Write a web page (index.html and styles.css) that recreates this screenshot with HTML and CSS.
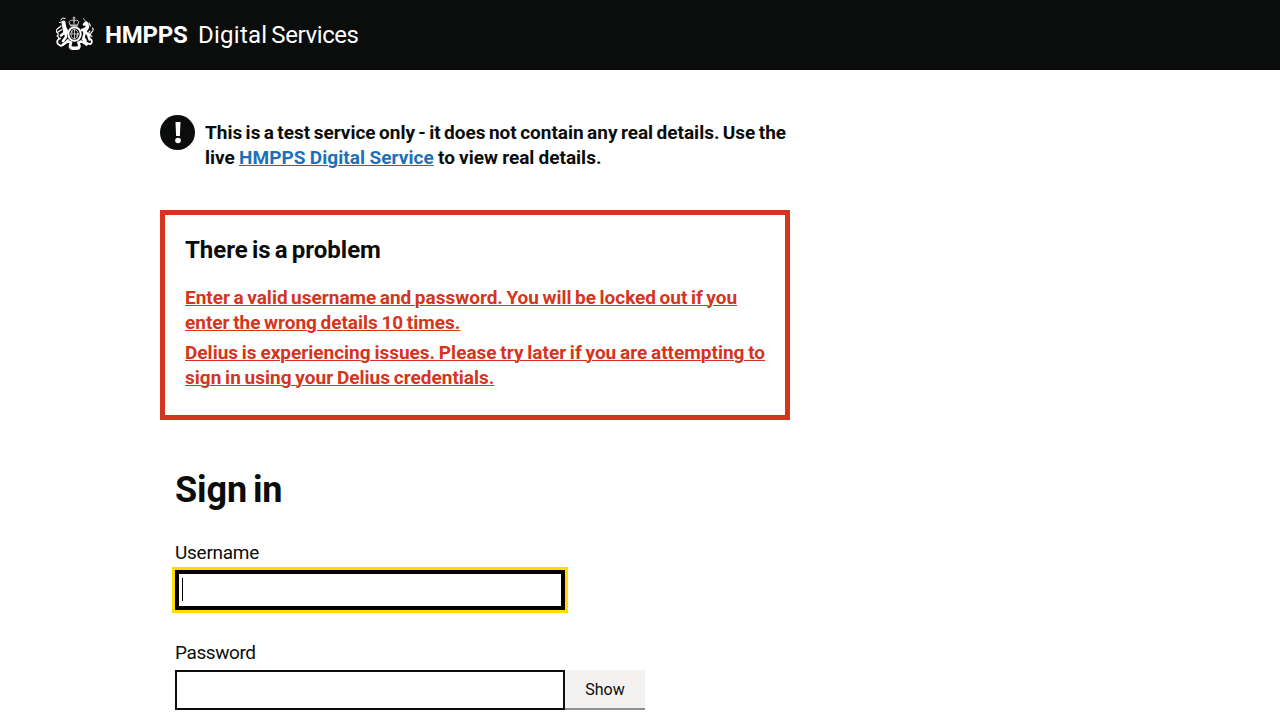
FILE: index.html
```html
<!DOCTYPE html>
<html lang="en">
<head>
<meta charset="utf-8">
<title>HMPPS Digital Services - Sign in</title>
<link rel="stylesheet" href="styles.css">
</head>
<body>
<header class="header">
  <svg class="crest" viewBox="0 0 40 35" width="40" height="35" aria-hidden="true">
    <g fill="none" stroke="#fff" stroke-linecap="round" stroke-linejoin="round">
      <path stroke-width=".8" d="M19 1v2.500M18 2h2M14.200 5.800c1-2 3.500-2 4.800-.6 1.300-1.400 3.800-1.400 4.800.6l-1.300 3.200h-7zM19 4v4M15.500 9.800h7"/>
      <ellipse cx="19.500" cy="18" rx="6.200" ry="6.800" stroke-width="2"/>
      <ellipse cx="19.500" cy="18" rx="3.600" ry="4.500" stroke-width=".7"/>
      <path stroke-width=".7" d="M19.500 13v10M15.500 18h8M17 15v2M22 19v2.500"/>
      <path stroke-width="4" d="M8.500 6.500l.8 5L11.500 16"/>
      <path stroke-width="2.500" d="M10 12l-1 5-3 2.500M10.500 16.500l.5 4.500-3 4"/>
      <path stroke-width="1.200" d="M6 10l-3 2.500M7 13.500l-4 2.500M2.500 19.500l1.500 3M3.500 12c-2.500 1-2.500 4-1 5s.5 2.500-.5 3"/>
      <path stroke-width="1" d="M6 4l1.500-2 2.500.5M6.500 6l-2 .5"/>
      <path stroke-width=".7" d="M28.300 2.300l2.500 3.200"/>
      <path stroke-width="3.600" d="M31.500 7.500l1 3.500-3 4.500"/>
      <path stroke-width="2.500" d="M29 8.500l2-2M31 12.500l-4 1.500M30 15.500l3 3 1.500 5M30 16l-1.500 5.500 2 3"/>
      <path stroke-width="1.100" d="M34 7l1.500 3M37.500 12c1.500 1.500.5 3-1 4.500s-1.500 3 .5 4M35 15c-2 1-1 3 0 5"/>
      <path stroke-width="1.800" d="M5 22.500c-3 1-3.500 4-2 5.500M3 28l3 2 3-2 4-4M35 22.500c2.500 2 2.500 4 .5 5.500l-3-.5-5-4.500"/>
      <path stroke-width="2.700" d="M8 28.500c2-1.500 3.500-3 5.500-3l2.500 1 -1 4c2 3 7.500 3 9.500 0l-1-4 2.500-1c2 0 3.500 1.500 5.500 3"/>
      <path stroke-width="3" d="M16 32h7.500"/>
    </g>
  </svg>
  <span class="organisation">HMPPS</span>
  <span class="service"><span class="service-first">Digital</span> <span class="service-second">Services</span></span>
</header>
<main class="content">
  <div class="warning">
    <span class="warning-icon"><svg viewBox="0 0 35 35" width="35" height="35" aria-hidden="true"><path fill="#fff" d="M15.500 7h5l-.6 14h-3.800z"/><circle cx="18" cy="25.500" r="2.800" fill="#fff"/></svg></span>
    <strong class="warning-text"><span class="w1">This is a test service only - it does not contain any real details. Use the</span><br><span class="w2">live <a href="#">HMPPS Digital Service</a> to view real details.</span></strong>
  </div>
  <section class="error-summary">
    <h2 class="error-title">There is a problem</h2>
    <ul class="error-list">
      <li><a href="#username"><span class="e1">Enter a valid username and password. You will be locked out if you</span><br><span class="e2">enter the wrong details 10 times.</span></a></li>
      <li><a href="#username"><span class="e3">Delius is experiencing issues. Please try later if you are attempting to</span><br><span class="e4">sign in using your Delius credentials.</span></a></li>
    </ul>
  </section>
  <form class="form">
    <h1 class="heading">Sign in</h1>
    <div class="group">
      <label class="label username" for="username">Username</label>
      <div class="input focused" id="username"><span class="caret"></span></div>
    </div>
    <div class="group">
      <label class="label password" for="password">Password</label>
      <div class="row">
        <input class="input" id="password" type="password">
        <button class="show" type="button">Show</button>
      </div>
    </div>
  </form>
</main>
</body>
</html>
```
FILE: styles.css
```css
* { box-sizing: border-box; }
body { margin: 0; background: #fff; color: #0b0c0c; font: 19px/25px Roboto, sans-serif; height: 720px; overflow: hidden; }
.header { height: 70px; background: #0b0c0c; color: #fff; display: flex; align-items: center; padding: 0 55px; font-size: 24px; line-height: 30px; white-space: nowrap; }
.crest { display: block; margin-top: -4px; }
.organisation { font-weight: 700; margin-left: 10px; width: 93px; letter-spacing: -.2px; }
.service { word-spacing: -2px; }
.service-first { letter-spacing: .25px; }
.service-second { letter-spacing: -.4px; }
.content { width: 960px; margin: 0 auto; padding-top: 45px; white-space: nowrap; }
.warning { display: flex; gap: 10px; height: 95px; }
.warning-icon { width: 35px; height: 35px; border-radius: 50%; background: #0b0c0c; }
.warning-icon svg { display: block; }
.warning-text { padding-top: 5px; font-weight: 700; }
.w1 { word-spacing: -1.32px; }
.w2 { word-spacing: -.55px; }
a { color: #1d70b8; text-decoration: underline; text-decoration-thickness: 1px; text-underline-offset: 1px; }
.w2 a { letter-spacing: .07px; }
.error-summary { width: 630px; height: 210px; border: 5px solid #d4351c; padding: 20px; }
.error-title { margin: 0 0 20px; font-size: 24px; line-height: 30px; font-weight: 700; word-spacing: -1.8px; }
.error-list { list-style: none; margin: 0; padding: 0; font-weight: 700; }
.error-list li { margin-bottom: 5px; }
.error-list a { color: #d4351c; }
.e1 { word-spacing: -1.2px; }
.e2 { word-spacing: -1.15px; }
.e3 { word-spacing: -.95px; }
.e4 { word-spacing: -.9px; }
.form { padding: 50px 15px 0; }
.heading { margin: 0 0 30px; font-size: 36px; line-height: 40px; font-weight: 700; word-spacing: -3px; letter-spacing: -.1px; }
.group { margin-bottom: 30px; }
.label { display: block; margin-bottom: 5px; }
.username { letter-spacing: -.27px; }
.password { letter-spacing: -.42px; }
.input { display: block; width: 390px; height: 40px; border: 2px solid #0b0c0c; border-radius: 0; background: #fff; outline: 0; padding: 5px; }
.focused { border: 4px solid #000; outline: 3px solid #fd0; padding: 4px 3px; }
.caret { display: block; width: 1px; height: 23px; background: #000; }
.row { display: flex; }
.show { width: 80px; height: 38px; border: 0; padding: 0; background: #f3f2f1; box-shadow: 0 2px 0 #929191; color: #0b0c0c; font: 16px/19px Roboto, sans-serif; }
```
